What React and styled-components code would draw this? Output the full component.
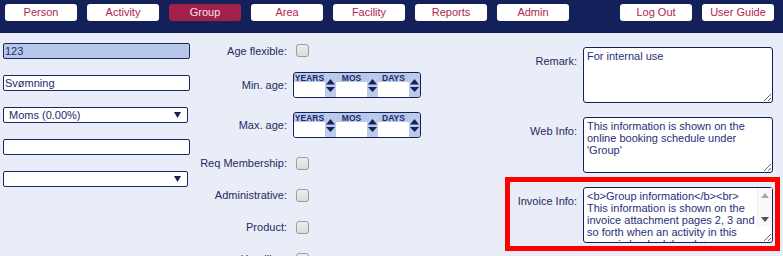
import styled, { createGlobalStyle } from "styled-components";

const GlobalStyle = createGlobalStyle`
  html, body {
    margin: 0;
    height: 256px;
    overflow: hidden;
    background: #e9edf7;
    font-family: "Liberation Sans", Arial, sans-serif;
    font-size: 11px;
    color: #1f2a5e;
  }
`;

const Header = styled.div`
  display: flex;
  align-items: flex-start;
  gap: 10px;
  height: 33px;
  box-sizing: border-box;
  padding: 4px 9px 0 5px;
  background: #13205a;
`;

const NavGroup = styled.div`
  display: flex;
  gap: 10px;
  margin-left: ${(props) => (props.right ? "auto" : "0")};
`;

const NavButton = styled.div`
  width: 72px;
  height: 17px;
  line-height: 17px;
  text-align: center;
  border-radius: 3px;
  font-size: 11px;
  background: ${(props) => (props.active ? "#a3204a" : "#ffffff")};
  color: ${(props) => (props.active ? "#f3e3ea" : "#b0234d")};
`;

const Main = styled.div`
  display: flex;
  padding: 0 8px 0 3px;
`;

const LeftColumn = styled.div`
  display: flex;
  flex-direction: column;
  gap: 16px;
  width: 187px;
  padding-top: 10px;
`;

const TextInput = styled.div`
  box-sizing: border-box;
  width: 187px;
  height: 16px;
  line-height: 14px;
  padding: 0 1px;
  border: 1px solid #1c2660;
  border-radius: 2px;
  background: ${(props) => (props.readOnly ? "#b7c7e9" : "#ffffff")};
  color: #1c2a6b;
`;

const SelectBox = styled.div`
  position: relative;
  box-sizing: border-box;
  width: 185px;
  height: 16px;
  line-height: 14px;
  padding: 0 5px;
  border: 1px solid #1c2660;
  border-radius: 2px;
  background: #ffffff;
  color: #1c2a6b;
`;

const SelectArrow = styled.svg`
  position: absolute;
  right: 6px;
  top: 4px;
`;

const MiddleColumn = styled.div`
  display: flex;
  flex-direction: column;
  margin-left: 5px;
  padding-top: 1px;
`;

const FieldRow = styled.div`
  display: flex;
  align-items: center;
  gap: 6px;
  height: ${(props) => props.h}px;
`;

const FieldLabel = styled.div`
  width: 92px;
  text-align: right;
  white-space: nowrap;
  color: #1f2a5e;
`;

const Checkbox = styled.div`
  box-sizing: border-box;
  width: 13px;
  height: 13px;
  margin-left: 3px;
  border: 1px solid #9c9c9c;
  border-radius: 3px;
  background: linear-gradient(#ececec, #dcdcdc);
`;

const AgeBox = styled.div`
  display: grid;
  grid-template-columns: repeat(3, 31px 11px);
  grid-template-rows: 9px 15px;
  border: 1px solid #14215b;
  border-radius: 3px;
  background: #b8c8e8;
  overflow: hidden;
`;

const AgeLabel = styled.div`
  grid-row: 1;
  font-size: 8.5px;
  font-weight: bold;
  line-height: 10px;
  text-align: center;
  white-space: nowrap;
  color: #1c2a6b;
`;

const AgeField = styled.div`
  grid-row: 2;
  background: #ffffff;
`;

const Spinner = styled.div`
  grid-row: 1 / 3;
  display: flex;
  justify-content: center;
  padding-top: 6px;
  background: #bccbea;
`;

const RightColumn = styled.div`
  display: flex;
  flex-direction: column;
  gap: 6px;
  margin-left: auto;
  padding-top: 9px;
`;

const NoteRow = styled.div`
  display: flex;
  gap: 6px;
  padding: 5px 2px 3px 0;
  outline: ${(props) => (props.highlighted ? "5px solid #ff0000" : "none")};
`;

const NoteLabel = styled.div`
  width: 67px;
  text-align: right;
  padding-top: 8px;
  color: #1f2a5e;
`;

const NoteField = styled.div`
  position: relative;
  width: 190px;
  height: 56px;
`;

const NoteArea = styled.textarea`
  display: block;
  box-sizing: border-box;
  width: 190px;
  height: 56px;
  margin: 0;
  padding: ${(props) => (props.scroll ? "2px 16px 2px 3px" : "2px 3px")};
  border: 1px solid #14215b;
  border-radius: 3px;
  background: #ffffff;
  font-family: "Liberation Sans", Arial, sans-serif;
  font-size: 11px;
  color: #1f2f7a;
  outline: none;
  overflow: hidden;
`;

const ScrollBar = styled.div`
  position: absolute;
  top: 1px;
  right: 1px;
  bottom: 16px;
  width: 15px;
  display: flex;
  flex-direction: column;
  justify-content: space-between;
  align-items: center;
  padding: 5px 0;
  box-sizing: border-box;
  background: #f9f9f9;
  border-left: 1px solid #eeeeee;
  pointer-events: none;
`;

const leftNav = ["Person", "Activity", "Group", "Area", "Facility", "Reports", "Admin"];

function SpinArrows() {
  return (
    <svg width="9" height="13" viewBox="0 0 9 13">
      <path d="M4.5 0 L9 5.5 H0 Z" fill="#14215b" />
      <path d="M0 8 H9 L4.5 13 Z" fill="#14215b" />
    </svg>
  );
}

function AgeInput() {
  const parts = ["YEARS", "MOS", "DAYS"];
  return (
    <AgeBox>
      {parts.map((p, i) => [
        <AgeLabel key={p + "l"} style={{ gridColumn: i * 2 + 1 }}>
          {p}
        </AgeLabel>,
        <AgeField key={p + "f"} style={{ gridColumn: i * 2 + 1 }} />,
        <Spinner key={p + "s"} style={{ gridColumn: i * 2 + 2 }}>
          <SpinArrows />
        </Spinner>,
      ])}
    </AgeBox>
  );
}

function Select({ value }) {
  return (
    <SelectBox>
      {value}
      <SelectArrow width="7" height="6" viewBox="0 0 7 6">
        <path d="M0 0 H7 L3.5 6 Z" fill="#14215b" />
      </SelectArrow>
    </SelectBox>
  );
}

function Note({ label, value, scroll, highlighted }) {
  return (
    <NoteRow highlighted={highlighted}>
      <NoteLabel>{label}</NoteLabel>
      <NoteField>
        <NoteArea scroll={scroll} defaultValue={value} />
        {scroll && (
          <ScrollBar>
            <svg width="8" height="5" viewBox="0 0 8 5">
              <path d="M4 0 L8 5 H0 Z" fill="#a8a8a8" />
            </svg>
            <svg width="8" height="5" viewBox="0 0 8 5">
              <path d="M0 0 H8 L4 5 Z" fill="#505050" />
            </svg>
          </ScrollBar>
        )}
      </NoteField>
    </NoteRow>
  );
}

const invoiceText =
  "<b>Group information</b><br>\nThis information is shown on the invoice attachment pages 2, 3 and so forth when an activity in this group is booked<br><br>\nContact us for questions.";

export default function App() {
  return (
    <>
      <GlobalStyle />
      <Header>
        <NavGroup>
          {leftNav.map((n) => (
            <NavButton key={n} active={n === "Group"}>
              {n}
            </NavButton>
          ))}
        </NavGroup>
        <NavGroup right>
          <NavButton>Log Out</NavButton>
          <NavButton>User Guide</NavButton>
        </NavGroup>
      </Header>
      <Main>
        <LeftColumn>
          <TextInput readOnly>123</TextInput>
          <TextInput>Svømning</TextInput>
          <Select value="Moms (0.00%)" />
          <TextInput />
          <Select value="" />
        </LeftColumn>
        <MiddleColumn>
          <FieldRow h={33}>
            <FieldLabel>Age flexible:</FieldLabel>
            <Checkbox />
          </FieldRow>
          <FieldRow h={36}>
            <FieldLabel>Min. age:</FieldLabel>
            <AgeInput />
          </FieldRow>
          <FieldRow h={44}>
            <FieldLabel>Max. age:</FieldLabel>
            <AgeInput />
          </FieldRow>
          <FieldRow h={32}>
            <FieldLabel>Req Membership:</FieldLabel>
            <Checkbox />
          </FieldRow>
          <FieldRow h={32}>
            <FieldLabel>Administrative:</FieldLabel>
            <Checkbox />
          </FieldRow>
          <FieldRow h={32}>
            <FieldLabel>Product:</FieldLabel>
            <Checkbox />
          </FieldRow>
          <FieldRow h={32}>
            <FieldLabel>Handling:</FieldLabel>
            <Checkbox />
          </FieldRow>
        </MiddleColumn>
        <RightColumn>
          <Note label="Remark:" value="For internal use" />
          <Note
            label="Web Info:"
            value="This information is shown on the online booking schedule under 'Group'"
          />
          <Note label="Invoice Info:" value={invoiceText} scroll highlighted />
        </RightColumn>
      </Main>
    </>
  );
}
